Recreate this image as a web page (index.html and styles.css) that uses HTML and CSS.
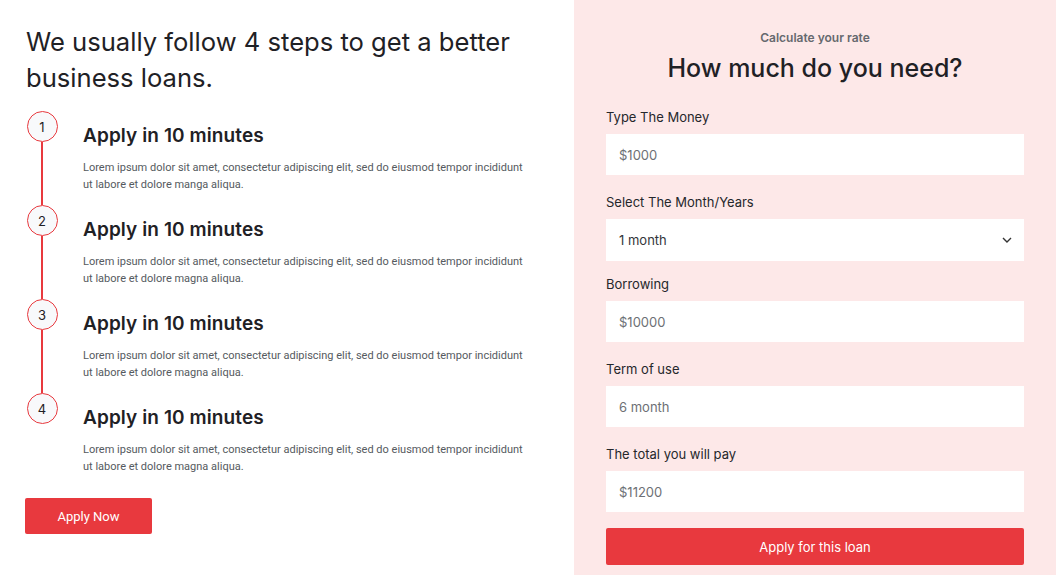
FILE: index.html
```html
<!DOCTYPE html>
<html lang="en">
<head>
<meta charset="utf-8">
<title>Business loans</title>
<link rel="stylesheet" href="styles.css">
</head>
<body>
<div class="page">
  <section class="steps-col">
    <h1 class="steps-title">We usually follow 4 steps to get a better business loans.</h1>
    <ol class="steps">
      <li class="step">
        <div class="marker"><span class="num">1</span><span class="line"></span></div>
        <div class="step-body">
          <h3 class="step-title">Apply in 10 minutes</h3>
          <p class="step-text">Lorem ipsum dolor sit amet, consectetur adipiscing elit, sed do eiusmod tempor incididunt ut labore et dolore manga aliqua.</p>
        </div>
      </li>
      <li class="step">
        <div class="marker"><span class="num">2</span><span class="line"></span></div>
        <div class="step-body">
          <h3 class="step-title">Apply in 10 minutes</h3>
          <p class="step-text">Lorem ipsum dolor sit amet, consectetur adipiscing elit, sed do eiusmod tempor incididunt ut labore et dolore magna aliqua.</p>
        </div>
      </li>
      <li class="step">
        <div class="marker"><span class="num">3</span><span class="line"></span></div>
        <div class="step-body">
          <h3 class="step-title">Apply in 10 minutes</h3>
          <p class="step-text">Lorem ipsum dolor sit amet, consectetur adipiscing elit, sed do eiusmod tempor incididunt ut labore et dolore magna aliqua.</p>
        </div>
      </li>
      <li class="step step-last">
        <div class="marker"><span class="num">4</span></div>
        <div class="step-body">
          <h3 class="step-title">Apply in 10 minutes</h3>
          <p class="step-text">Lorem ipsum dolor sit amet, consectetur adipiscing elit, sed do eiusmod tempor incididunt ut labore et dolore magna aliqua.</p>
        </div>
      </li>
    </ol>
    <a class="btn btn-apply" href="#">Apply Now</a>
  </section>

  <section class="calc">
    <p class="calc-sub">Calculate your rate</p>
    <h2 class="calc-title">How much do you need?</h2>
    <form class="calc-form">
      <div class="field">
        <label class="field-label">Type The Money</label>
        <div class="field-box">$1000</div>
      </div>
      <div class="field field-select">
        <label class="field-label">Select The Month/Years</label>
        <div class="field-box select-box">
          <span class="select-value">1 month</span>
          <svg class="chev" width="10" height="6" viewBox="0 0 10 6"><path d="M1 1l4 4 4-4" fill="none" stroke="#333" stroke-width="1.4"/></svg>
        </div>
      </div>
      <div class="field">
        <label class="field-label">Borrowing</label>
        <div class="field-box">$10000</div>
      </div>
      <div class="field">
        <label class="field-label">Term of use</label>
        <div class="field-box">6 month</div>
      </div>
      <div class="field">
        <label class="field-label">The total you will pay</label>
        <div class="field-box">$11200</div>
      </div>
      <a class="btn btn-loan" href="#">Apply for this loan</a>
    </form>
  </section>
</div>
</body>
</html>
```

FILE: styles.css
```css
* { box-sizing: border-box; }
html, body { margin: 0; padding: 0; background: #fff; }
body { width: 1063px; height: 575px; overflow: hidden; font-family: "Inter", "Roboto", sans-serif; color: #1f2125; }

.page { display: flex; width: 1063px; height: 575px; padding-right: 7px; }

.steps-col { width: 574px; padding: 24px 0 0 26px; display: flex; flex-direction: column; align-items: flex-start; }
.steps-title { margin: 0; font-size: 25.6px; line-height: 36px; font-weight: 400; color: #1f2125; width: 510px; }

.steps { list-style: none; margin: 15px 0 0; padding: 0; }
.step { display: flex; height: 94px; }
.marker { width: 32px; display: flex; flex-direction: column; align-items: center; }
.num { width: 31px; height: 31px; flex: none; border: 1px solid #e8393e; border-radius: 50%; background: #f8f9fb; display: flex; align-items: center; justify-content: center; font-size: 13px; color: #1f2125; }
.line { flex: 1; width: 2px; background: #e8393e; }
.step-body { margin-left: 25px; padding-top: 13px; }
.step-title { margin: 0; font-size: 19px; line-height: 24px; font-weight: 600; color: #1f2125; letter-spacing: 0.1px; }
.step-text { margin: 11px 0 0; width: 452px; font-family: "Roboto", sans-serif; font-size: 11px; line-height: 17px; color: #555a60; }

.btn { display: flex; align-items: center; justify-content: center; background: #e8393e; color: #fff; text-decoration: none; border-radius: 2px; }
.btn-apply { margin-top: 11px; margin-left: -1px; width: 127px; height: 36px; font-family: "Roboto", sans-serif; font-size: 13px; }

.calc { width: 482px; background: #fde8e8; padding: 30px 32px 0; display: flex; flex-direction: column; }
.calc-sub { margin: 0; text-align: center; font-size: 12px; line-height: 16px; font-weight: 600; color: #66696e; }
.calc-title { margin: 5px 0 0; text-align: center; font-size: 25px; line-height: 34px; font-weight: 500; color: #1f2125; }

.calc-form { margin-top: 23px; display: flex; flex-direction: column; }
.field { margin-bottom: 18px; display: flex; flex-direction: column; }
.field-select { margin-bottom: 14px; }
.field-label { font-size: 13px; line-height: 18px; color: #25272b; margin-bottom: 8px; }
.field-box { height: 41px; background: #fff; padding: 0 13px; display: flex; align-items: center; font-size: 13px; color: #6d7075; }
.select-box { height: 42px; justify-content: space-between; padding-right: 12px; }
.select-value { color: #33363a; }
.chev { display: block; }

.btn-loan { margin-top: -2px; height: 37px; font-size: 13px; }
```
